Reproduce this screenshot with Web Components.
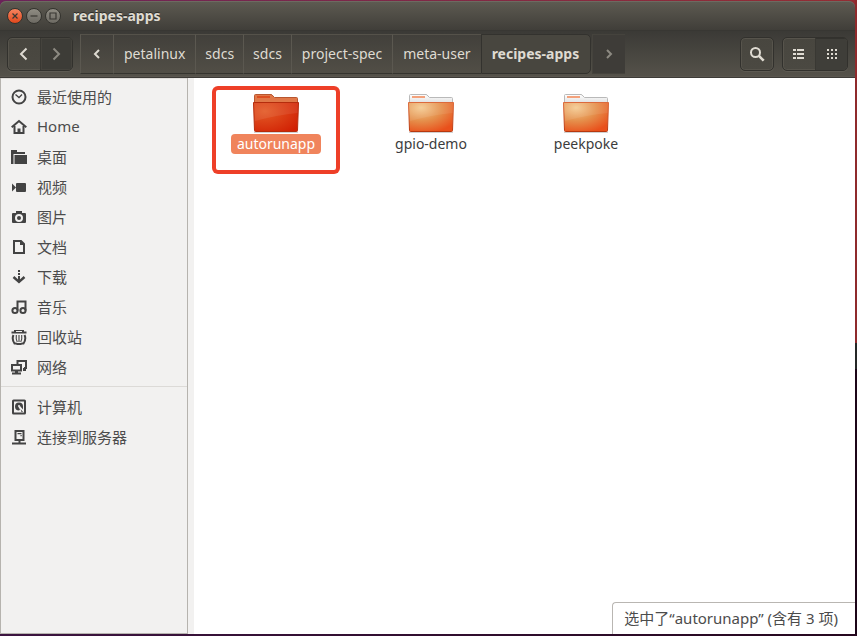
<!DOCTYPE html>
<html lang="zh-CN">
<head>
<meta charset="utf-8">
<title>recipes-apps</title>
<style>
html, body { height: 100%; margin: 0; }
body {
  font-family: "Noto Sans", "Noto Sans CJK SC", sans-serif;
  font-size: 14px;
  color: #4c4c4c;
  background:
    linear-gradient(90deg, #3c1440, #26081f) bottom / 100% 2px no-repeat,
    linear-gradient(#8f2a2c 0 54%, #252827 54% 58%, #1c0518 58%) right / 2px 100% no-repeat,
    linear-gradient(90deg, #6b2359, #942d33);
}
</style>
</head>
<body>
<file-window>
  <title-bar slot="title">recipes-apps</title-bar>
  <tool-bar slot="tools"></tool-bar>
  <places-list slot="places"></places-list>
  <folder-view slot="files">
    <folder-item selected marked>autorunapp</folder-item>
    <folder-item>gpio-demo</folder-item>
    <folder-item>peekpoke</folder-item>
  </folder-view>
  <status-note slot="files">选中了“autorunapp” (含有 3 项)</status-note>
</file-window>
<script>
const define = (name, html) => customElements.define(name, class extends HTMLElement {
  constructor() {
    super();
    this.attachShadow({ mode: "open" }).innerHTML =
      (typeof html === "function" ? html(this) : html);
  }
});

define("file-window", `
<style>
:host { display: flex; flex-direction: column; height: 100vh; box-sizing: border-box; padding: 1px 2px 2px 0; }
.body { display: flex; flex: 1; min-height: 0; background: #f2f1f0; }
main { position: relative; flex: 1; min-width: 0; margin-left: 6px; background: #fff; }
</style>
<slot name="title"></slot>
<slot name="tools"></slot>
<div class="body"><slot name="places"></slot><main><slot name="files"></slot></main></div>`);

define("title-bar", `
<style>
:host { display: flex; align-items: center; gap: 3px; height: 29px; padding-left: 7px; border-radius: 6px 6px 0 0;
  background: linear-gradient(#5e5b52, #403e39); box-shadow: inset 0 1px #6d6a61; box-sizing: border-box; color: #dfdbd2; }
button { width: 16px; height: 16px; padding: 0; border: 1px solid #34332e; border-radius: 50%;
  background: linear-gradient(#8f8c83, #6d6a63); display: grid; place-items: center; }
.close { background: linear-gradient(#f68560, #e2481c); }
svg { width: 14px; height: 14px; fill: none; stroke: #393732; stroke-width: 1.2; }
h1 { margin: 0 0 0 9px; font-size: 14px; line-height: 20px; font-weight: 700; text-shadow: 0 -1px #2c2b27; }
</style>
<button class="close" aria-label="关闭"><svg viewBox="0 0 14 14"><path d="M4.500 4.500l5 5M9.500 4.500l-5 5"/></svg></button>
<button aria-label="最小化"><svg viewBox="0 0 14 14"><path d="M3.500 7h7"/></svg></button>
<button aria-label="最大化"><svg viewBox="0 0 14 14"><path d="M4 4h6v6H4z"/></svg></button>
<h1><slot></slot></h1>`);

define("tool-bar", `
<style>
:host { display: flex; align-items: center; height: 48px; box-sizing: border-box; padding: 0 7px;
  background: linear-gradient(#3b3a36, #55524a); border-top: 1px solid #383733; border-bottom: 1px solid #3d3b37; box-shadow: inset 0 -1px #5a564f; color: #dfdbd2; }
button { font: inherit; color: inherit; border: 0; padding: 0; background: none; display: grid; place-items: center; }
.group { display: flex; height: 34px; box-sizing: border-box; border: 1px solid #32312d; border-radius: 5px;
  box-shadow: 0 1px #5d5a52, inset 0 0 0 1px #57544c; background: linear-gradient(#48463f, #4b4942); overflow: hidden; }
.group button { width: 32px; }
.group button + button { border-left: 1px solid #393833; }
.group .off { background: #3d3c37; color: #8d8a82; box-shadow: inset 0 0 0 1px #45433d; }
.group .on { background: #3f3e39; box-shadow: inset 0 1px #33322e; }
nav { display: flex; height: 40px; margin-left: 7px; }
nav button { padding: 0 10px 2px; white-space: nowrap; border: 1px solid; border-color: #55524a #35342f #35342f #5b5850;
  border-right-width: 0; background: linear-gradient(#42403b, #514e46); }
nav .short { padding: 0 9px 2px; }
nav .arrow { width: 33px; padding: 0; }
nav .current { padding: 0 11px 2px 10px; font-weight: 700; background: #48463f; border: 1px solid #33322e; border-radius: 0 5px 5px 0; }
nav .next { margin-left: 1px; background: #3e3c38; color: #8d8a82; border-color: #45433d; }
.space { flex: 1; }
.view { margin-left: 8px; }
svg { display: block; width: 16px; height: 16px; fill: none; stroke: currentColor; stroke-width: 2; }
</style>
<div class="group">
  <button aria-label="后退"><svg viewBox="0 0 16 16"><path d="M10.500 2.500L5 8l5.500 5.500"/></svg></button>
  <button class="off" aria-label="前进"><svg viewBox="0 0 16 16"><path d="M4.500 2.500L10 8l-5.500 5.500"/></svg></button>
</div>
<nav aria-label="路径">
  <button class="arrow" aria-label="上一级"><svg viewBox="0 0 16 16"><path d="M10 4L6 8l4 4"/></svg></button>
  <button>petalinux</button><button class="short">sdcs</button><button class="short">sdcs</button><button>project-spec</button><button>meta-user</button>
  <button class="current" aria-current="page">recipes-apps</button>
  <button class="arrow next" aria-label="下一级"><svg viewBox="0 0 16 16"><path d="M6 4l4 4-4 4"/></svg></button>
</nav>
<span class="space"></span>
<div class="group"><button aria-label="搜索"><svg viewBox="0 0 16 16"><circle cx="6.500" cy="6.500" r="4.500"/><path d="M9.700 9.700l5 5" stroke-width="2.600"/></svg></button></div>
<div class="group view">
  <button aria-label="列表视图"><svg viewBox="0 0 16 16"><path d="M2 4h3M2 8h3M2 12h3M6 4h7M6 8h7M6 12h7"/></svg></button>
  <button class="on" aria-label="图标视图"><svg viewBox="0 0 16 16"><path d="M3 4h2M7 4h2M11 4h2M3 8h2M7 8h2M11 8h2M3 12h2M7 12h2M11 12h2"/></svg></button>
</div>`);

const icons = {
  recent: '<circle cx="8" cy="8" r="6.500" class="s"/><path class="s" style="stroke-width:1.300" d="M4.500 5.500L8 8.500l3-3"/>',
  home: '<path class="s" d="M.700 8.300L8 2l7.300 6.300"/><path class="s" d="M3.500 7v7h9V7"/><path d="M6.500 9.500h3V14h-3z"/>',
  desktop: '<path d="M0 1h6v2h8v2H2.500v10H0z"/><path d="M3.500 6H16v9H3.500z"/>',
  video: '<rect x="5" y="4" width="10" height="9" rx="1"/><path d="M1 4.500l4 4-4 4z"/>',
  photo: '<path fill-rule="evenodd" d="M5 2h6v2h3q1 0 1 1v8q0 1-1 1H2q-1 0-1-1V5q0-1 1-1h3zM8 5a4 4 0 1 0 0 8 4 4 0 0 0 0-8z"/><circle cx="8" cy="9" r="2"/>',
  doc: '<path class="s" d="M3 2h7l3 3v9H3z"/><path d="M9 1l5 5H9z"/>',
  download: '<path d="M7 1h2v2H7zM7 4h2v2H7zM7 7h2v5H7z"/><path class="s" style="stroke-width:2.400" d="M2.500 8L8 13l5.500-5"/>',
  music: '<circle class="s" cx="4" cy="11.500" r="2.600"/><circle class="s" cx="12" cy="11.500" r="2.600"/><path class="s" d="M6.500 11.500V2.500h8v9M6.500 5.500"/>',
  trash: '<path d="M3 1h10v1.500h2.500v2H.500v-2H3z"/><path fill="#f2f1f0" d="M5 2h6v1H5z"/><path class="s" d="M2.500 6Q.500 10 3.500 14.500h2M13.500 6q2 4-1 8.500h-2M5.500 15h5"/><path class="s" style="stroke-width:1.100" d="M5.300 6q-.600 4 1 7M10.700 6q.600 4-1 7M8 6v7"/>',
  network: '<path class="s" d="M6.500 5V2H15v7h-2M1 6h9v5.500H1z"/><path d="M4 12h3v1.500h3V15.500H1v-2h3zM12 9h3v3h-3z"/>',
  disk: '<path class="s" d="M2 2q0-.500.500-.500h11q.500 0 .500.500v12q0 .500-.500.500h-11q-.500 0-.500-.500z"/><path d="M8 3.500a4 4 0 1 0 0 8l1-1-1.500-2.500 1.500-1 3 3.500V7.500a4 4 0 0 0-4-4zM9.500 10l2.500 3h-1.500z"/><circle cx="8" cy="7" r="1" fill="#f2f1f0"/>',
  server: '<path class="s" d="M4.500 2h8v9h-8zM1 14.500h14M8.500 11v3"/><path d="M6.500 4h4v1.200h-4zM9.500 6h1.200v1.200H9.500z"/>'
};

define("place-link", el => `
<style>
:host { display: block; }
a { display: flex; align-items: center; gap: 10px; height: 30px; padding-left: 10px; color: inherit; text-decoration: none; font-size: 15px; }
span { padding-bottom: 2px; }
svg { width: 16px; height: 16px; flex: none; fill: #434343; }
.s { fill: none; stroke: #434343; stroke-width: 2; }
</style>
<a href="#"><svg viewBox="0 0 16 16" aria-hidden="true">${icons[el.getAttribute("icon")]}</svg><span><slot></slot></span></a>`);

define("places-list", `
<style>
:host { display: block; flex: 0 0 188px; box-sizing: border-box; padding-top: 4px; background: #f2f1f0;
  border: solid #b6b3ae; border-width: 0 1px 1px 1px; box-shadow: inset 0 1px #dedbd8; }
hr { margin: 4px 0 5px; border: 0; border-top: 1px solid #dcdad7; }
</style>
<nav aria-label="位置">
<place-link icon="recent">最近使用的</place-link>
<place-link icon="home">Home</place-link>
<place-link icon="desktop">桌面</place-link>
<place-link icon="video">视频</place-link>
<place-link icon="photo">图片</place-link>
<place-link icon="doc">文档</place-link>
<place-link icon="download">下载</place-link>
<place-link icon="music">音乐</place-link>
<place-link icon="trash">回收站</place-link>
<place-link icon="network">网络</place-link>
<hr>
<place-link icon="disk">计算机</place-link>
<place-link icon="server">连接到服务器</place-link>
</nav>`);

define("folder-view", `
<style>
:host { display: flex; flex-wrap: wrap; gap: 27px; padding: 8px 0 0 18px; }
</style><slot></slot>`);

define("folder-item", `
<style>
:host { display: flex; flex-direction: column; align-items: center; width: 128px; height: 88px; box-sizing: border-box; padding-top: 6px; border-radius: 6px; }
:host([marked]) { box-shadow: inset 0 0 0 4px #ee3f28; }
svg { display: block; width: 48px; height: 42px; flex: none; }
span { line-height: 20px; padding: 0 6px; border-radius: 4px; color: #3c3c3c; }
:host([selected]) span { background: #f0845c; color: #fff; }
.paper { fill: url(#p); stroke: #b9b9b9; }
.front { fill: url(#f); stroke: url(#e); }
.tag { fill: #f4a27c; }
:host([selected]) .paper { fill: #e07848; stroke: #b8562f; }
:host([selected]) .front { fill: url(#d); stroke: #b52c0c; }
:host([selected]) .tag { fill: #dc4e20; }
</style>
<svg viewBox="0 0 48 42" aria-hidden="true">
<defs>
<linearGradient id="p" x2="0" y2="1"><stop stop-color="#fff"/><stop offset="1" stop-color="#ddd"/></linearGradient>
<linearGradient id="e" x2="0" y2="1"><stop stop-color="#dc6a3c"/><stop offset="1" stop-color="#b8380f"/></linearGradient>
<radialGradient id="f" cx=".28" cy=".18" r=".9"><stop stop-color="#f4cb92"/><stop offset=".5" stop-color="#e5904c"/><stop offset="1" stop-color="#e9501b"/></radialGradient>
<radialGradient id="d" cx=".25" cy=".3" r=".9"><stop stop-color="#e35a26"/><stop offset="1" stop-color="#d12003"/></radialGradient>
</defs>
<path d="M2 40.500h44" stroke="#000" stroke-opacity=".18"/>
<path class="paper" d="M2.500 12V3.500q0-1 1-1H19q1 0 2 1.500l1.500 1.500h22q1 0 1 1V12z"/>
<path class="tag" d="M5 4h13v2H5z"/>
<path class="front" d="M1.500 10.500h45L45.500 38.500q0 1-1 1h-41q-1 0-1-1z"/>
<path fill="#fff" fill-opacity=".08" d="M2 11h44l-.400 10Q25 23 3 29z"/>
</svg>
<span><slot></slot></span>`);

define("status-note", `
<style>
:host { position: absolute; right: 0; bottom: 0; box-sizing: border-box; padding: 5px 17px 5px 11px; font-size: 15px; line-height: 21px; white-space: nowrap;
  background: #fff; border: 1px solid #b9b6b2; border-width: 1px 0 0 1px; border-radius: 4px 0 0 0; }
</style><slot></slot>`);
</script>
</body>
</html>
